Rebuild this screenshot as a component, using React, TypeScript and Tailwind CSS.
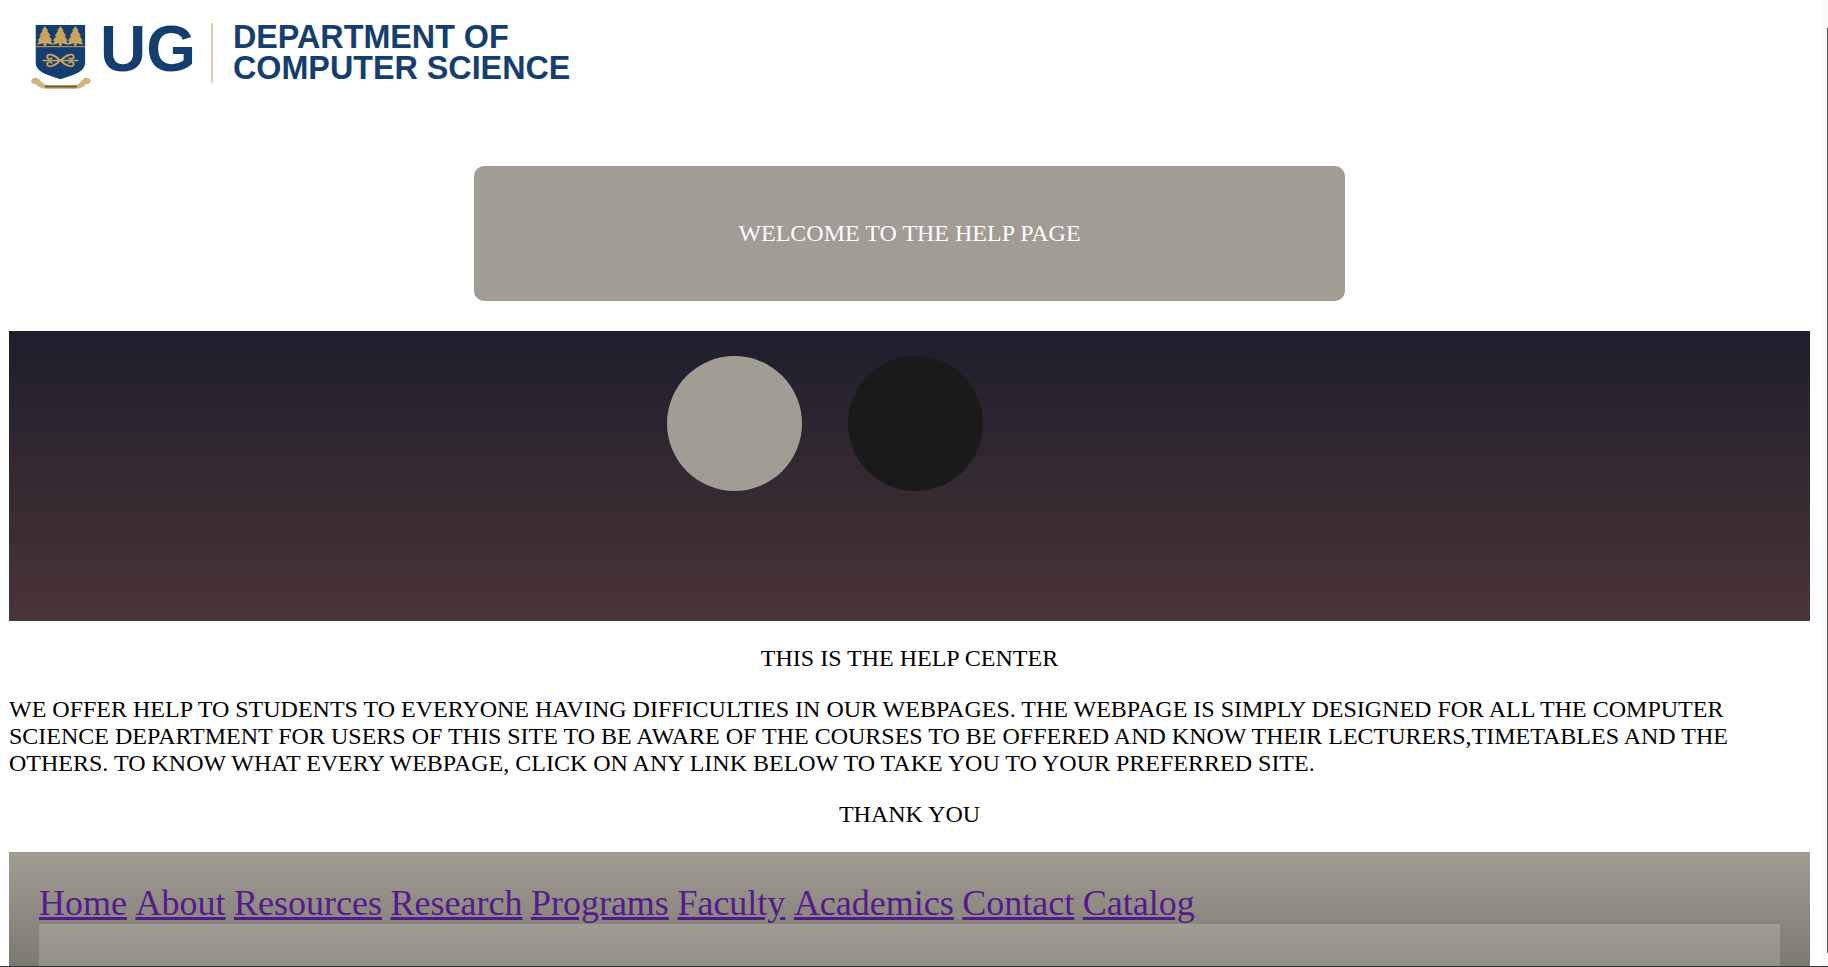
const links = ['Home', 'About', 'Resources', 'Research', 'Programs', 'Faculty', 'Academics', 'Contact', 'Catalog'];

function Tree({ x }: { x: number }) {
  return (
    <g fill="#c9a45c">
      <path d={`M${x} 1 L${x + 3} 6 L${x + 2} 6 L${x + 5} 11 L${x + 3.5} 11 L${x + 6.5} 16 L${x + 5} 16 L${x + 7} 20 L${x + 1.2} 18.5 L${x + 1.2} 21 L${x - 1.2} 21 L${x - 1.2} 18.5 L${x - 7} 20 L${x - 5} 16 L${x - 6.5} 16 L${x - 3.5} 11 L${x - 5} 11 L${x - 2} 6 L${x - 3} 6 Z`} />
    </g>
  );
}

function Crest() {
  return (
    <svg width="62" height="66" viewBox="0 0 54 67" preserveAspectRatio="none" className="shrink-0">
      <g transform="translate(5 0)">
        <path d="M0 0 H43 V38 C43 48 32 51 21.5 55 C11 51 0 48 0 38 Z" fill="#153e70" />
        <Tree x={8} />
        <Tree x={21.5} />
        <Tree x={34.5} />
        <rect x="0" y="21.5" width="43" height="1" fill="#c9a45c" />
        <g fill="none" stroke="#c9a45c" strokeWidth="1.7">
          <path d="M21 36 C17 30 10 28 10 32.5 C10 35 14 35 14 33" />
          <path d="M21 36 C17 42 10 44 10 39.5 C10 37 14 37 14 39" />
          <path d="M22 36 C26 30 33 28 33 32.5 C33 35 29 35 29 33" />
          <path d="M22 36 C26 42 33 44 33 39.5 C33 37 29 37 29 39" />
          <path d="M6 36 H37" />
        </g>
      </g>
      <path d="M1 56 C3 53 6 53 8 55 C10 59 13 60 15 61 H39 C42 60 44 59 46 55 C48 53 51 53 53 56 C53 59 51 60 49 60 C47 63 43 65 39 65 H15 C11 65 7 63 5 60 C3 60 1 59 1 56 Z" fill="#d2b67c" />
      <rect x="13" y="61.5" width="28" height="2" fill="#6b5a3a" />
    </svg>
  );
}

export default function App() {
  return (
    <div className="relative flex h-[967px] w-[1828px] overflow-hidden bg-white font-['Liberation_Serif',serif] text-[24px] leading-[27px] text-black">
      <main className="min-w-0 flex-1 pl-[9px] pr-[12px]">
        <header className="-ml-[9px] flex h-[166px] items-start pl-[30px] pt-[23px]">
          <div className="pt-[2px]">
            <Crest />
          </div>
          <span className="ml-[8px] mt-[-10px] font-['Liberation_Sans',sans-serif] text-[64px] font-bold leading-[72px] text-[#153e70]">
            UG
          </span>
          <div className="ml-[15px] h-[60px] w-[2px] bg-[#dccca6]" />
          <div className="ml-[20px] mt-[-1px] font-['Liberation_Sans',sans-serif] text-[32.3px] font-bold leading-[31px] text-[#153e70]">
            <div>DEPARTMENT OF</div>
            <div>COMPUTER SCIENCE</div>
          </div>
        </header>

        <div className="ml-[465px] flex h-[135px] w-[871px] items-center justify-center rounded-[10px] bg-[#a19c94] text-white">
          WELCOME TO THE HELP PAGE
        </div>

        <section className="mt-[30px] flex h-[290px] gap-[46px] bg-gradient-to-b from-[#1e1e2c] to-[#4a3436] pl-[657.5px] pt-[25px]">
          <div className="h-[135px] w-[135px] rounded-full bg-[#a19c94]" />
          <div className="h-[135px] w-[135px] rounded-full bg-[#1a1a1a]" />
        </section>

        <p className="mt-[24px] text-center">THIS IS THE HELP CENTER</p>
        <p className="mt-[24px]">
          WE OFFER HELP TO STUDENTS TO EVERYONE HAVING DIFFICULTIES IN OUR WEBPAGES. THE WEBPAGE IS SIMPLY DESIGNED FOR ALL THE COMPUTER SCIENCE DEPARTMENT FOR USERS OF THIS SITE TO BE AWARE OF THE COURSES TO BE OFFERED AND KNOW THEIR LECTURERS,TIMETABLES AND THE OTHERS. TO KNOW WHAT EVERY WEBPAGE, CLICK ON ANY LINK BELOW TO TAKE YOU TO YOUR PREFERRED SITE.
        </p>
        <p className="mt-[24px] text-center">THANK YOU</p>

        <footer className="mt-[24px] h-[160px] bg-gradient-to-b from-[#a19c94] to-[#6f6c65] px-[30px] pt-[31px]">
          <nav className="flex gap-[8.5px] text-[36px] leading-[41px] text-[#551a8b]">
            {links.map(link => (
              <a key={link} href="#" className="underline">{link}</a>
            ))}
          </nav>
          <div className="h-[90px] bg-gradient-to-b from-[#a19c94] to-[#85827a]" />
        </footer>
      </main>

      <div className="relative w-[6px] shrink-0 bg-[#fafafa]">
        <div className="absolute right-0 top-[28px] h-[925px] w-[1px] bg-[#555555]" />
      </div>
      <div className="absolute inset-x-0 bottom-0 h-[1px] bg-[#333333]" />
    </div>
  );
}
